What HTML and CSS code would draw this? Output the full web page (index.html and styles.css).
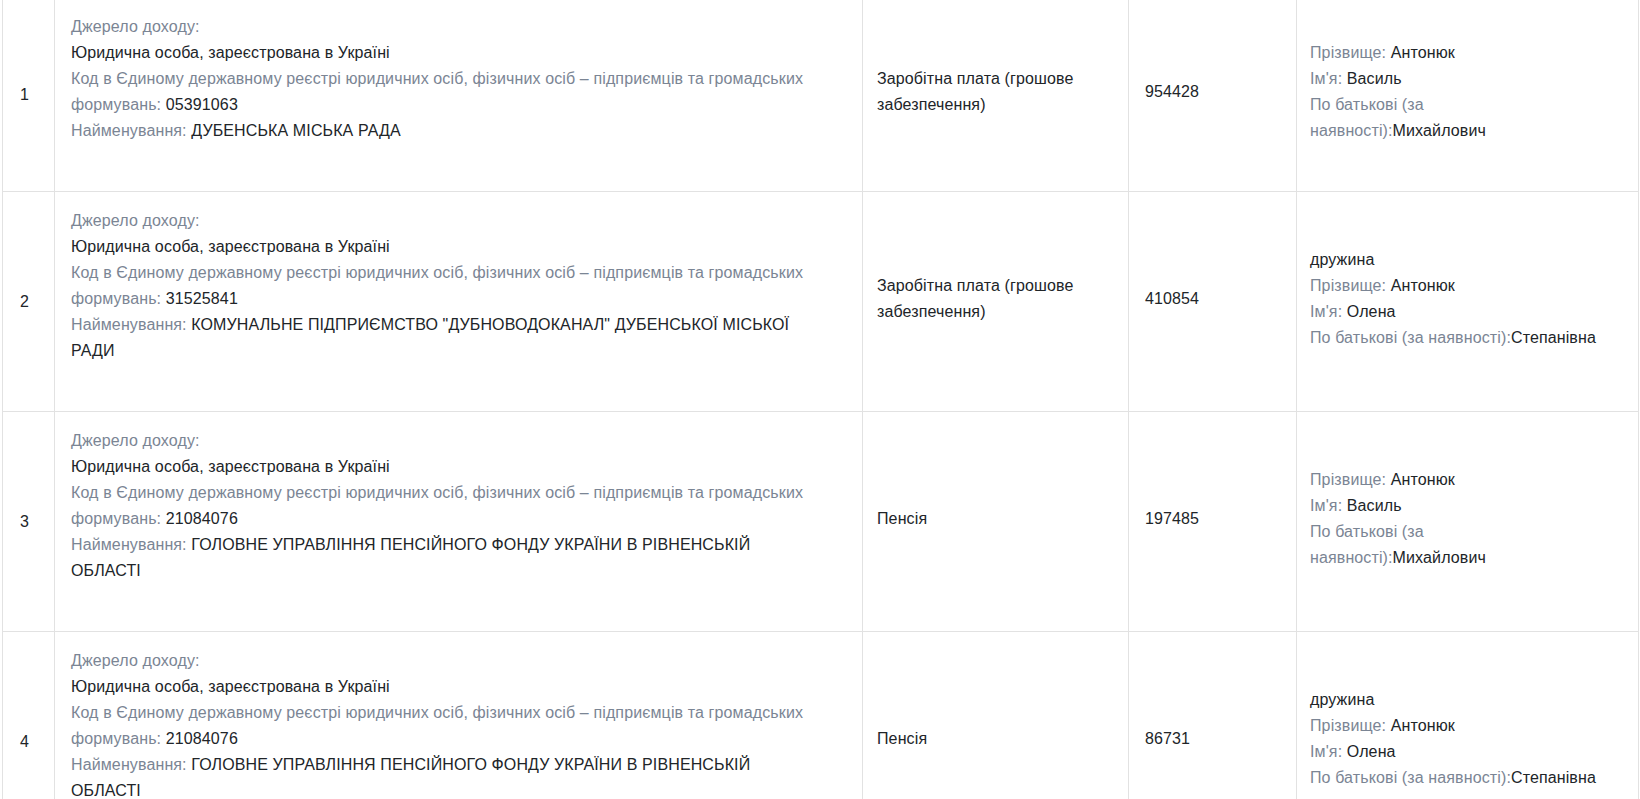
FILE: index.html
```html
<!DOCTYPE html>
<html lang="uk">
  <head>
    <title>Доходи</title>
    <meta charset="UTF-8" />
    <link rel="stylesheet" href="styles.css">
  </head>
  <body>

    <div class="table-wrapper">
      <table class="income-table">
        <colgroup>
          <col class="col-num">
          <col class="col-source">
          <col class="col-type">
          <col class="col-sum">
          <col class="col-person">
        </colgroup>
        <tbody>

          <tr>
            <td class="num">1</td>
            <td class="source">
              <div class="lbl">Джерело доходу:</div>
              <div>Юридична особа, зареєстрована в Україні</div>
              <div><span class="lbl">Код в Єдиному державному реєстрі юридичних осіб, фізичних осіб – підприємців та громадських формувань: </span><span>05391063</span></div>
              <div><span class="lbl">Найменування: </span><span>ДУБЕНСЬКА МІСЬКА РАДА</span></div>
            </td>
            <td class="type">Заробітна плата (грошове забезпечення)</td>
            <td class="sum">954428</td>
            <td class="person">
              <div><span class="lbl">Прізвище: </span>Антонюк</div>
              <div><span class="lbl">Ім'я: </span>Василь</div>
              <div><span class="lbl">По батькові (за наявності):</span>Михайлович</div>
            </td>
          </tr>

          <tr>
            <td class="num">2</td>
            <td class="source">
              <div class="lbl">Джерело доходу:</div>
              <div>Юридична особа, зареєстрована в Україні</div>
              <div><span class="lbl">Код в Єдиному державному реєстрі юридичних осіб, фізичних осіб – підприємців та громадських формувань: </span><span>31525841</span></div>
              <div><span class="lbl">Найменування: </span><span>КОМУНАЛЬНЕ ПІДПРИЄМСТВО "ДУБНОВОДОКАНАЛ" ДУБЕНСЬКОЇ МІСЬКОЇ РАДИ</span></div>
            </td>
            <td class="type">Заробітна плата (грошове забезпечення)</td>
            <td class="sum">410854</td>
            <td class="person">
              <div>дружина</div>
              <div><span class="lbl">Прізвище: </span>Антонюк</div>
              <div><span class="lbl">Ім'я: </span>Олена</div>
              <div><span class="lbl">По батькові (за наявності):</span>Степанівна</div>
            </td>
          </tr>

          <tr>
            <td class="num">3</td>
            <td class="source">
              <div class="lbl">Джерело доходу:</div>
              <div>Юридична особа, зареєстрована в Україні</div>
              <div><span class="lbl">Код в Єдиному державному реєстрі юридичних осіб, фізичних осіб – підприємців та громадських формувань: </span><span>21084076</span></div>
              <div><span class="lbl">Найменування: </span><span>ГОЛОВНЕ УПРАВЛІННЯ ПЕНСІЙНОГО ФОНДУ УКРАЇНИ В РІВНЕНСЬКІЙ ОБЛАСТІ</span></div>
            </td>
            <td class="type">Пенсія</td>
            <td class="sum">197485</td>
            <td class="person">
              <div><span class="lbl">Прізвище: </span>Антонюк</div>
              <div><span class="lbl">Ім'я: </span>Василь</div>
              <div><span class="lbl">По батькові (за наявності):</span>Михайлович</div>
            </td>
          </tr>

          <tr>
            <td class="num">4</td>
            <td class="source">
              <div class="lbl">Джерело доходу:</div>
              <div>Юридична особа, зареєстрована в Україні</div>
              <div><span class="lbl">Код в Єдиному державному реєстрі юридичних осіб, фізичних осіб – підприємців та громадських формувань: </span><span>21084076</span></div>
              <div><span class="lbl">Найменування: </span><span>ГОЛОВНЕ УПРАВЛІННЯ ПЕНСІЙНОГО ФОНДУ УКРАЇНИ В РІВНЕНСЬКІЙ ОБЛАСТІ</span></div>
            </td>
            <td class="type">Пенсія</td>
            <td class="sum">86731</td>
            <td class="person">
              <div>дружина</div>
              <div><span class="lbl">Прізвище: </span>Антонюк</div>
              <div><span class="lbl">Ім'я: </span>Олена</div>
              <div><span class="lbl">По батькові (за наявності):</span>Степанівна</div>
            </td>
          </tr>

        </tbody>
      </table>
    </div>

  </body>
</html>
```

FILE: styles.css
```css
html, body {
  margin: 0;
  padding: 0;
  overflow: hidden; /* no scrollbars, table runs past the bottom */
  background-color: white;
}
body {
  font-family: "Liberation Sans", Arial, sans-serif;
  font-size: 16px;
  line-height: 26px;
  letter-spacing: 0.12px;
  color: #212529;
}
.table-wrapper {
  padding-left: 2px;
  margin-top: -3px; /* first row starts a little above the top edge */
}
.income-table {
  width: 1636px;
  border-collapse: collapse;
  table-layout: fixed;
}
.col-num { width: 52px; }
.col-source { width: 808px; }
.col-type { width: 266px; }
.col-sum { width: 168px; }
.col-person { width: 342px; }

.income-table td {
  border: 1px solid #e2e2e2;
  padding: 0 16px;
  vertical-align: middle;
}
.income-table td.num {
  padding-left: 17px;
  padding-right: 0;
}
.income-table td.source {
  vertical-align: top;
  padding: 16px 50px 47px 16px;
}
.income-table td.type {
  padding-left: 14px;
  padding-bottom: 5px;
}
.income-table td.sum {
  padding-bottom: 5px;
}
.income-table td.person {
  padding-left: 13px;
  padding-right: 39px; /* narrow enough that the long patronymic wraps */
  padding-bottom: 5px;
}
.lbl {
  color: #7b8594;
}
```
